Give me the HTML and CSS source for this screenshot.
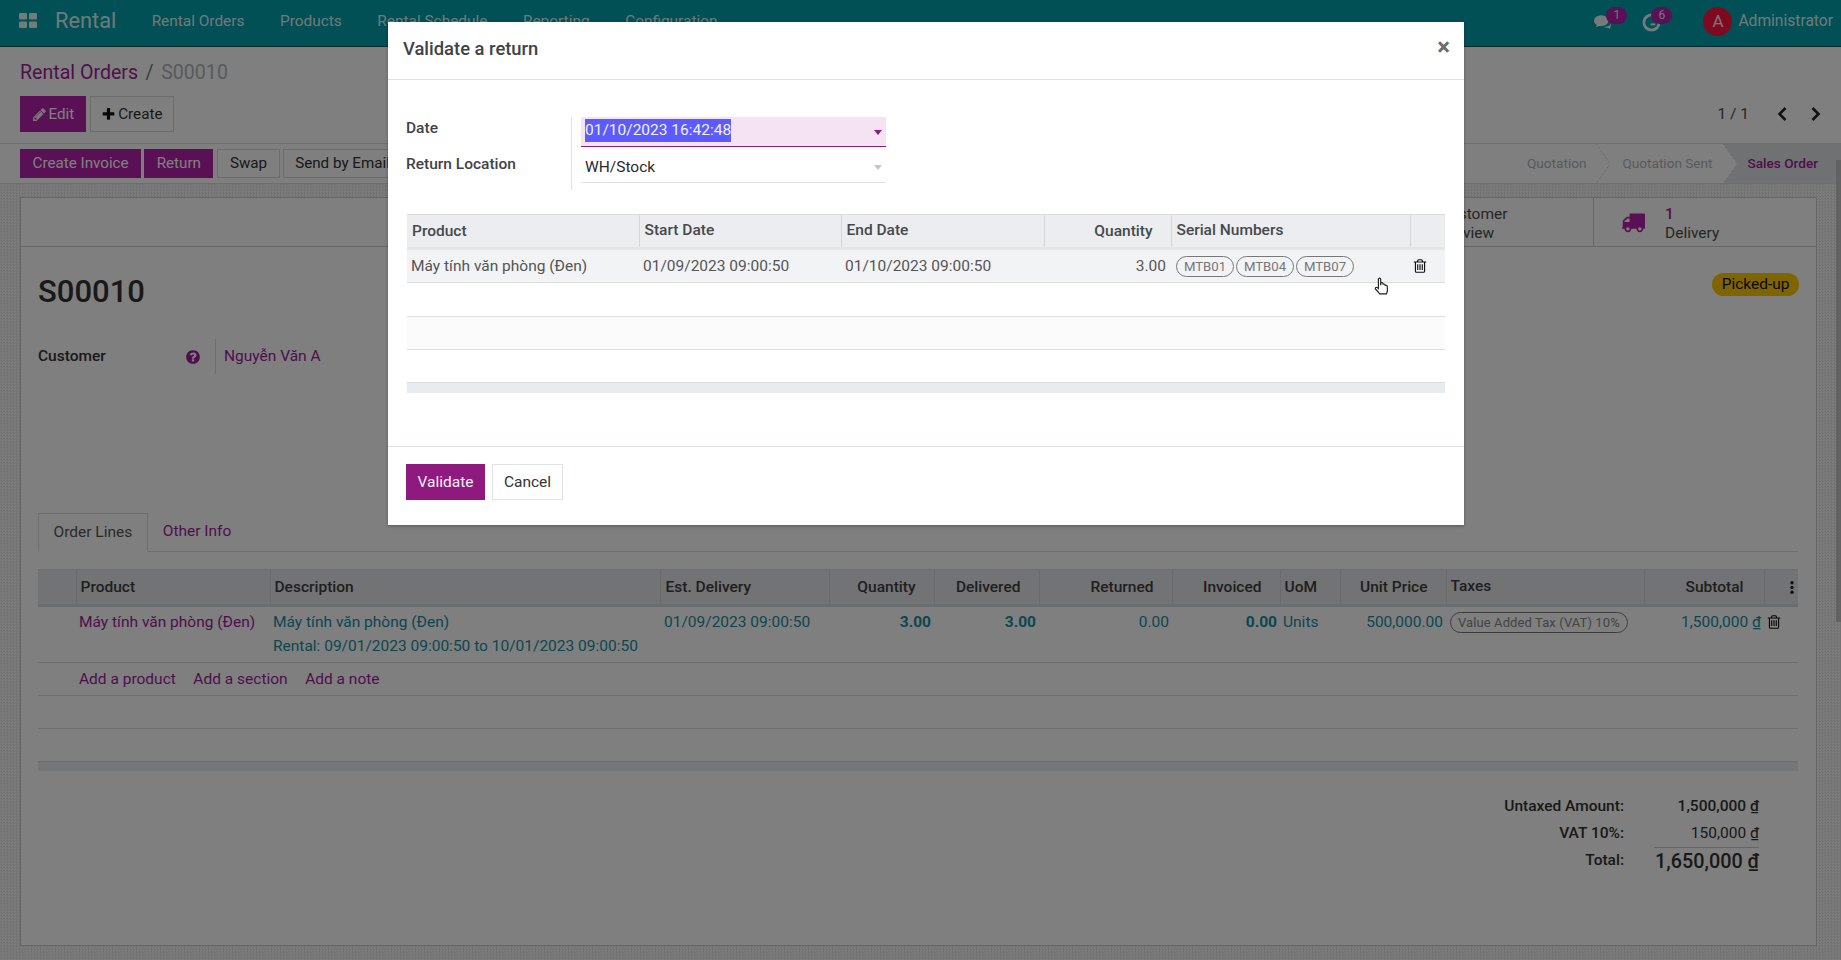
FILE: index.html
```html
<!DOCTYPE html>
<html lang="vi">
<head>
<meta charset="utf-8">
<title>Validate a return</title>
<link rel="stylesheet" href="styles.css">
</head>
<body>
<header class="navbar">
  <svg class="apps" viewBox="0 0 18 15"><rect width="8" height="6.5" rx="1.2"/><rect x="10" width="8" height="6.5" rx="1.2"/><rect y="8.5" width="8" height="6.5" rx="1.2"/><rect x="10" y="8.5" width="8" height="6.5" rx="1.2"/></svg>
  <span class="brand">Rental</span>
  <nav class="menu"><a>Rental Orders</a><a>Products</a><a>Rental Schedule</a><a>Reporting</a><a>Configuration</a></nav>
  <div class="systray">
    <span class="tray tray-chat">
      <svg class="tray-icon" viewBox="0 0 20 16"><ellipse cx="8" cy="6.5" rx="8" ry="6"/><path d="M4 10 2 14l6-3z"/><path d="M11 13.500c4 0 7-1.500 8-4l-1 6-5-1.500z"/></svg>
      <b class="count">1</b>
    </span>
    <span class="tray tray-clock">
      <svg class="tray-icon" viewBox="0 0 20 20"><circle cx="10" cy="10" r="8" fill="none" stroke="currentColor" stroke-width="3"/><path d="M9 11h5v2H9z"/></svg>
      <b class="count">6</b>
    </span>
    <span class="avatar">A</span>
    <span class="user">Administrator</span>
  </div>
</header>

<section class="control">
  <div class="crumbs"><a>Rental Orders</a><i>/</i><span>S00010</span></div>
  <div class="control-row">
    <button class="btn primary"><svg class="ico" viewBox="0 0 1792 1792"><path d="M491 1536l91-91-235-235-91 91v107h128v128h107zm523-928q0-22-22-22-10 0-17 7l-542 542q-7 7-7 17 0 22 22 22 10 0 17-7l542-542q7-7 7-17zm-54-192l416 416-832 832h-416v-416zm683 96q0 53-37 90l-166 166-416-416 166-165q36-38 90-38 53 0 91 38l235 234q37 39 37 91z"/></svg>Edit</button>
    <button class="btn plain"><svg class="ico dark" viewBox="0 0 1792 1792"><path d="M1600 736v192q0 40-28 68t-68 28h-416v416q0 40-28 68t-68 28h-192q-40 0-68-28t-28-68v-416h-416q-40 0-68-28t-28-68v-192q0-40 28-68t68-28h416v-416q0-40 28-68t68-28h192q40 0 68 28t28 68v416h416q40 0 68 28t28 68z"/></svg>Create</button>
    <div class="pager"><span>1 / 1</span>
      <svg class="chev" viewBox="0 0 12 16"><path d="M9 2 3 8l6 6"/></svg>
      <svg class="chev" viewBox="0 0 12 16"><path d="M3 2l6 6-6 6"/></svg>
    </div>
  </div>
</section>

<section class="statusbar">
  <button class="btn primary small">Create Invoice</button>
  <button class="btn primary small">Return</button>
  <button class="btn plain small swap">Swap</button>
  <button class="btn plain small">Send by Email</button>
  <div class="steps">
    <span class="step">Quotation</span>
    <span class="step">Quotation Sent</span>
    <span class="step current">Sales Order</span>
  </div>
</section>

<main class="content">
  <article class="sheet">
    <div class="stats">
      <div class="stat preview"><span>Customer<br>Preview</span></div>
      <div class="stat delivery">
        <svg class="truck" viewBox="0 0 1792 1792"><path d="M640 1408q0-52-38-90t-90-38-90 38-38 90 38 90 90 38 90-38 38-90zm-384-512h384v-256h-158q-13 0-22 9l-195 195q-9 9-9 22v30zm1280 512q0-52-38-90t-90-38-90 38-38 90 38 90 90 38 90-38 38-90zm256-1088v1024q0 15-4 26.500t-13.500 18.500-16.500 11.500-23.500 6-22.500 2-25.500 0-22.500-.5q0 106-75 181t-181 75-181-75-75-181h-384q0 106-75 181t-181 75-181-75-75-181h-64q-3 0-22.500.5t-25.500 0-22.500-2-23.500-6-16.500-11.500-13.500-18.500-4-26.500q0-26 19-45t45-19v-320q0-8-.5-35t0-38 2.500-34.500 6.500-37 14-30.500 22.500-30l198-198q19-19 50.500-32t58.500-13h160v-192q0-26 19-45t45-19h1024q26 0 45 19t19 45z"/></svg>
        <span class="stat-text"><b>1</b><span>Delivery</span></span>
      </div>
    </div>
    <div class="sheet-body">
      <div class="title-row">
        <h1>S00010</h1>
        <span class="ribbon">Picked-up</span>
      </div>
      <div class="customer">
        <label>Customer</label>
        <svg class="help" viewBox="0 0 1792 1792"><path d="M1024 1376v-192q0-14-9-23t-23-9h-192q-14 0-23 9t-9 23v192q0 14 9 23t23 9h192q14 0 23-9t9-23zm256-672q0-88-55.500-163t-138.500-116-170-41q-243 0-371 213-15 24 8 42l132 100q7 6 19 6 16 0 25-12 53-68 86-92 34-24 86-24 48 0 85.500 26t37.500 59q0 38-20 61t-68 45q-63 28-115.500 86.500t-52.500 125.500v36q0 14 9 23t23 9h192q14 0 23-9t9-23q0-19 21.500-49.500t54.500-49.500q32-18 49-28.500t46-35 44.500-48 28-60.500 12.500-81zm384 192q0 209-103 385.500t-279.500 279.500-385.500 103-385.500-103-279.500-279.500-103-385.500 103-385.500 279.500-279.500 385.500-103 385.500 103 279.500 279.500 103 385.500z"/></svg>
        <a>Nguyễn Văn A</a>
      </div>
      <div class="tabs"><span class="tab active">Order Lines</span><span class="tab">Other Info</span></div>

      <table class="grid lines">
        <colgroup><col class="l1"><col class="l2"><col class="l3"><col class="l4"><col class="l5"><col class="l6"><col class="l7"><col class="l8"><col class="l9"><col class="l10"><col class="l11"><col class="l12"><col class="l13"></colgroup>
        <thead><tr><th></th><th>Product</th><th>Description</th><th class="est">Est. Delivery</th><th class="num">Quantity</th><th class="num">Delivered</th><th class="num">Returned</th><th class="num">Invoiced</th><th>UoM</th><th class="num">Unit Price</th><th class="up">Taxes</th><th class="num sub">Subtotal</th><th class="kebab"><svg class="dots" viewBox="0 0 4 13"><circle cx="2" cy="1.700" r="1.700"/><circle cx="2" cy="6.500" r="1.700"/><circle cx="2" cy="11.300" r="1.700"/></svg></th></tr></thead>
        <tbody>
          <tr class="tall info"><td></td><td class="link">Máy tính văn phòng (Đen)</td><td class="wide">Máy tính văn phòng (Đen)<br>Rental: 09/01/2023 09:00:50 to 10/01/2023 09:00:50</td><td class="est">01/09/2023 09:00:50</td><td class="val strong">3.00</td><td class="val strong">3.00</td><td class="val">0.00</td><td class="val strong">0.00</td><td>Units</td><td class="val">500,000.00</td><td><span class="pill tax">Value Added Tax (VAT) 10%</span></td><td class="val">1,500,000 ₫</td><td class="act"><svg class="trash" viewBox="0 0 1792 1792"><use href="#trash"/></svg></td></tr>
          <tr><td></td><td colspan="12" class="adders"><a>Add a product</a><a>Add a section</a><a>Add a note</a></td></tr>
          <tr><td colspan="13"></td></tr>
          <tr><td colspan="13"></td></tr>
        </tbody>
        <tfoot><tr><td colspan="13"></td></tr></tfoot>
      </table>

      <div class="totals">
        <b>Untaxed Amount:</b><b class="amount">1,500,000 ₫</b>
        <b>VAT 10%:</b><span class="amount">150,000 ₫</span>
        <b class="total-label">Total:</b><span class="amount total">1,650,000 ₫</span>
      </div>
    </div>
  </article>
</main>

<div class="scrollbar"></div>
<div class="backdrop"></div>

<section class="modal">
  <header class="modal-head"><h4>Validate a return</h4><span class="close">×</span></header>
  <div class="modal-body">
    <div class="form">
      <div class="labels"><label>Date</label><label>Return Location</label></div>
      <div class="fields">
        <div class="field focus"><span class="selected">01/10/2023 16:42:48</span><i class="caret"></i></div>
        <div class="field"><span>WH/Stock</span><i class="caret"></i></div>
      </div>
    </div>
    <table class="grid dlg">
      <colgroup><col class="d1"><col class="d2"><col class="d3"><col class="d4"><col class="d5"><col class="d6"></colgroup>
      <thead><tr><th>Product</th><th class="up">Start Date</th><th class="up">End Date</th><th class="num">Quantity</th><th class="up">Serial Numbers</th><th></th></tr></thead>
      <tbody>
        <tr class="picked"><td>Máy tính văn phòng (Đen)</td><td>01/09/2023 09:00:50</td><td>01/10/2023 09:00:50</td><td class="val">3.00</td><td class="pills"><span class="pill">MTB01</span><span class="pill">MTB04</span><span class="pill">MTB07</span></td><td class="act"><svg class="trash" viewBox="0 0 1792 1792"><path id="trash" d="M704 736v576q0 14-9 23t-23 9h-64q-14 0-23-9t-9-23v-576q0-14 9-23t23-9h64q14 0 23 9t9 23zm256 0v576q0 14-9 23t-23 9h-64q-14 0-23-9t-9-23v-576q0-14 9-23t23-9h64q14 0 23 9t9 23zm256 0v576q0 14-9 23t-23 9h-64q-14 0-23-9t-9-23v-576q0-14 9-23t23-9h64q14 0 23 9t9 23zm128 724v-948h-896v948q0 22 7 40.500t14.500 27 10.500 8.500h832q3 0 10.500-8.500t14.500-27 7-40.500zm-672-1076h448l-48-117q-7-9-17-11h-317q-10 2-17 11zm928 32v64q0 14-9 23t-23 9h-96v948q0 83-47 143.500t-113 60.500h-832q-66 0-113-58.500t-47-141.500v-952h-96q-14 0-23-9t-9-23v-64q0-14 9-23t23-9h309l70-167q15-37 54-63t79-26h320q40 0 79 26t54 63l70 167h309q14 0 23 9t9 23z"/></svg></td></tr>
        <tr class="second"><td colspan="6"></td></tr>
        <tr class="stripe"><td colspan="6"></td></tr>
        <tr><td colspan="6"></td></tr>
      </tbody>
      <tfoot><tr><td colspan="6"></td></tr></tfoot>
    </table>
  </div>
  <footer class="modal-foot"><button class="btn validate">Validate</button><button class="btn cancel">Cancel</button></footer>
</section>

<svg class="hand" viewBox="0 0 20 22"><path d="M5.500 2.500c0-1.600 2.500-1.600 2.500 0V9l.2-2c.3-1.300 2.200-1.200 2.300.2l.1 1.300c.3-1.200 2.200-1 2.300.3l.1.900c.4-1 2.100-.8 2.200.5l.2 3.500c.1 2-.4 3.200-1 4.800H6.800c-1-1.700-2.300-3-4.300-5-1.200-1.300.3-2.800 1.700-1.800l1.300 1z"/></svg>
</body>
</html>
```

FILE: styles.css
```css
* { box-sizing: border-box; }
html, body { margin: 0; height: 100%; }
body {
  width: 1841px;
  height: 960px;
  overflow: hidden;
  position: relative;
  background: #fff;
  font: 400 15.5px/24px Roboto, "Noto Sans", sans-serif;
  color: #4c4c4c;
}
a { color: #a01c98; }
button { font: inherit; }
h1, h4 { margin: 0; }

/* top bar */
.navbar {
  height: 47px;
  display: flex;
  align-items: center;
  padding: 0 0 4px 19px;
  background: #00a0ac;
  border-bottom: 1px solid #00525a;
  color: rgba(255, 255, 255, .9);
}
.apps { width: 18px; height: 15px; fill: currentColor; margin-top: -1px; }
.brand { font-size: 21.800px; margin-left: 18px; }
.menu { display: flex; margin-left: 17.500px; font-size: 15.400px; }
.menu a { color: inherit; padding: 0 17.800px; }
.systray { margin-left: auto; display: flex; align-items: center; padding-right: 8px; font-size: 15.600px; }
.tray { position: relative; display: block; }
.tray-chat { width: 18px; height: 16px; margin: 1px 30px 0 1px; }
.tray-clock { width: 19px; height: 19px; margin: 3px 42px 0 0; }
.tray-icon { display: block; width: 100%; height: 100%; fill: currentColor; }
.count {
  position: absolute;
  font-weight: 400;
  font-size: 12px;
  line-height: 17px;
  width: 21px;
  height: 17px;
  border-radius: 9px;
  text-align: center;
  background: #b420aa;
}
.tray-chat .count { left: 12px; top: -7px; }
.tray-clock .count { left: 9px; top: -6px; }
.avatar {
  width: 29px;
  height: 29px;
  border-radius: 50%;
  background: #ff1540;
  text-align: center;
  line-height: 29px;
  font-size: 17px;
  margin-right: 6px;
}

/* control panel */
.control { height: 97px; padding: 14px 19px 0 20px; border-bottom: 1px solid #ddd; }
.crumbs { font-size: 19.600px; line-height: 24px; display: flex; }
.crumbs i { font-style: normal; color: #777; margin: 0 7.500px; }
.crumbs span { color: #adb5bd; }
.control-row { display: flex; align-items: center; margin-top: 11px; gap: 4px; }
.btn {
  height: 36px;
  padding: 0 10.500px;
  border: 1px solid transparent;
  border-radius: 0;
  display: inline-flex;
  align-items: center;
  gap: 2px;
  color: #444;
  background: #fff;
  font-size: 15.200px;
}
.btn.primary { background: #b420aa; color: #fff; }
.btn.plain { border-color: #d8d8d8; color: #333; }
.btn.small { height: 29px; padding: 0 11.500px 1px; }
.ico { width: 15px; height: 15px; fill: #fff; opacity: .9; }
.ico.dark { fill: #111; opacity: 1; }
.pager { margin-left: auto; display: flex; align-items: center; }
.pager span { margin-right: 27px; }
.chev { width: 13px; height: 16px; fill: none; stroke: #222; stroke-width: 2.600; }
.chev + .chev { margin-left: 20px; }

/* status bar */
.statusbar {
  height: 40px;
  display: flex;
  align-items: center;
  padding-left: 20px;
  border-bottom: 1px solid #ddd;
  gap: 3px;
}
.statusbar .swap { margin-left: 1px; }
.steps { margin-left: auto; display: flex; align-self: stretch; }
.step { display: flex; align-items: center; color: #adb5bd; padding: 0 24px 1px 12px; position: relative; font-size: 13.600px; }
.step::after {
  content: "";
  position: absolute;
  right: 0;
  top: 0;
  width: 14px;
  height: 100%;
  background: linear-gradient(to top right, transparent 49%, #ccc 50%, transparent 52%) top/100% 50% no-repeat,
              linear-gradient(to bottom right, transparent 49%, #ccc 50%, transparent 52%) bottom/100% 50% no-repeat;
}
.step.current {
  color: #a01c98;
  font-weight: 500;
  background: #dee2e6;
  clip-path: polygon(0 0, 100% 0, 100% 100%, 0 100%, 14px 50%);
  padding: 0 23px 1px 24px;
  margin-left: -13px;
}
.step.current::after { display: none; }

/* sheet */
.content {
  height: 776px;
  padding: 13px 24px 0 20px;
  background: repeating-conic-gradient(#e6e6e6 0 25%, #fbfbfb 0 50%) 0 0 / 3px 3px;
}
.sheet { height: 749px; background: #fff; border: 1px solid #ccc; }
.stats { height: 49px; display: flex; justify-content: flex-end; border-bottom: 1px solid #ccc; }
.stat { display: flex; align-items: center; line-height: 19px; padding-top: 3px; }
.preview { width: 213px; padding-left: 60px; }
.delivery { width: 223px; padding-left: 27px; border-left: 1px solid #ccc; gap: 20px; }
.truck { width: 24px; height: 24px; fill: #b420aa; margin-top: -3px; }
.stat-text { display: flex; flex-direction: column; }
.stat-text b { color: #a01c98; font-weight: 500; }
.sheet-body { padding: 21px 18px 0 17px; }
.title-row { display: flex; justify-content: space-between; height: 48px; }
h1 { font-size: 31px; line-height: 48px; font-weight: 500; color: #333; }
.ribbon {
  height: 23px;
  margin: 5px -1px 0 0;
  padding: 0 9.500px;
  border-radius: 12px;
  background: #ffc800;
  color: #111;
  line-height: 23px;
  font-size: 15.500px;
}
.customer { display: flex; align-items: center; height: 35px; margin-top: 23px; }
.customer label { width: 147px; font-weight: 500; color: #333; margin-top: -2px; }
.help { width: 16px; height: 16px; fill: #a01c98; }
.customer a { border-left: 1px solid #ddd; margin-left: 14px; padding-left: 8px; height: 35px; line-height: 35px; }
.tabs { display: flex; margin-top: 139px; height: 39px; border-bottom: 1px solid #ddd; }
.tab { padding: 6px 15px; color: #a01c98; height: 39px; }
.tab.active { color: #555; border: 1px solid #ddd; border-bottom-color: #fff; height: 39px; padding-left: 14.500px; padding-right: 14.500px; }

/* tables */
.grid { table-layout: fixed; border-collapse: collapse; width: 100%; }
.grid th {
  height: 35px;
  padding: 0 4px 1px;
  background: #e4e6e9;
  border-left: 1px solid #d4d6da;
  border-top: 1px solid #dcdcdc;
  border-bottom: 3px solid #d4dbe0;
  text-align: left;
  font-weight: 500;
  color: #3f3f3f;
  overflow: hidden;
  white-space: nowrap;
}
.grid th:first-child { border-left: 0; }
.grid th.num { text-align: right; padding-right: 18px; }
.grid th.up { padding-top: 0; padding-bottom: 3px; }
.grid th.est { padding-left: 5px; }
.grid th.sub { padding-right: 20px; }
.grid td {
  height: 33px;
  padding: 0 4px 0 3px;
  border-bottom: 1px solid #ddd;
  white-space: nowrap;
  overflow: hidden;
}
.grid td.est { padding-left: 4px; }
.grid tfoot td { height: 10px; background: #e9ecef; border: 0; padding: 0; }
.grid .val { text-align: right; padding-right: 3px; }
.lines { margin-top: 17px; }
.lines th { height: 36px; }
.lines th.kebab { padding: 0 0 0 25px; }
.lines tfoot td { height: 9px; }
.dots { display: block; width: 4px; height: 13px; fill: #222; }
.info td { color: #168ea0; vertical-align: top; padding-top: 3px; height: 57px; }
.info td.link { color: #a01c98; }
.strong { font-weight: 700; }
.adders a { margin-right: 17.500px; }
.pill {
  display: inline-block;
  height: 21px;
  line-height: 19px;
  border: 1px solid #777;
  border-radius: 11px;
  color: #777;
  padding: 0 7px;
  font-size: 13.200px;
  margin-right: 2px;
}
.pill.tax { padding: 0 7px; margin: 2px 0 0 1px; color: #888; font-size: 13px; letter-spacing: .1px; }
.trash { width: 16px; height: 16px; fill: #111; display: block; }
.l1 { width: 38px; } .l2 { width: 194px; } .l3 { width: 390px; } .l4 { width: 169px; }
.l5, .l6 { width: 105px; } .l7 { width: 133px; } .l8 { width: 108px; } .l9 { width: 60px; }
.l10 { width: 106px; } .l11 { width: 198px; } .l12 { width: 120px; } .l13 { width: 34px; }
.info td.act { padding: 7px 0 0 2px; }

/* totals */
.totals {
  display: grid;
  grid-template-columns: auto 135px;
  width: max-content;
  margin: 22px 39px 0 auto;
  justify-items: end;
  align-items: center;
  grid-auto-rows: 27px;
  color: #333;
}
.totals b { font-weight: 500; }
.totals .amount { width: 105px; text-align: right; white-space: nowrap; }
b.amount { font-weight: 500; }
.amount.total {
  font-size: 19.800px;
  font-weight: 500;
  border-top: 1px solid #ccc;
  line-height: 28px;
  height: 30px;
  margin-top: 3px;
}

/* overlay */
.scrollbar { position: absolute; right: 0; top: 160px; width: 5px; height: 462px; background: #c4c4c4; }
.backdrop { position: absolute; inset: 0; background: rgba(0, 0, 0, .5); }
.modal {
  position: absolute;
  left: 388px;
  top: 22px;
  width: 1076px;
  height: 503px;
  background: #fff;
  display: flex;
  flex-direction: column;
  box-shadow: 0 1px 3px rgba(0, 0, 0, .3);
}
.modal-head {
  height: 58px;
  flex: none;
  display: flex;
  align-items: center;
  justify-content: space-between;
  padding: 0 14px 3px 15px;
  border-bottom: 1px solid #dee2e6;
}
.modal-head h4 { font-size: 18.400px; font-weight: 500; color: #3f4347; }
.close { font-size: 24px; font-weight: 700; color: #6c6c6c; margin-top: -4px; }
.modal-body { flex: 1; padding: 37px 20px 0 19px; border-bottom: 1px solid #dee2e6; }
.form { display: flex; height: 73px; }
.labels { width: 164px; display: flex; flex-direction: column; gap: 12px; margin: -1px 1px 0 -1px; }
.labels label { font-weight: 500; color: #3f4347; line-height: 24px; }
.fields { border-left: 1px solid #dee2e6; padding-left: 9px; width: 315px; display: flex; flex-direction: column; gap: 6px; }
.field {
  height: 30px;
  padding: 1px 4px 0;
  border-bottom: 1px solid #dee2e6;
  color: #2a2a2a;
  display: flex;
  align-items: flex-start;
  justify-content: space-between;
  line-height: 27px;
}
.field.focus { background: #f5e3f3; border-bottom-color: #8e1a80; line-height: 23px; padding-top: 2px; }
.selected { background: #5b5bff; color: #f5f0ff; }
.caret {
  width: 0;
  height: 0;
  margin: 11px 0 0;
  border: 4.500px solid transparent;
  border-top: 5px solid #c6c6c6;
  border-bottom: 0;
}
.focus .caret { border-top-color: #8e1a80; }
.dlg { margin-top: 24px; color: #555; }
.dlg th { height: 34px; padding: 0 5px 1px; background: #ecedef; border-bottom-color: #e1e6ea; color: #45494d; }
.dlg td { padding: 0 4px; }
.picked td, .second td { height: 34px; }
.picked td { background: #f2f3f5; }
.stripe td { background: #fbfbfb; }
.dlg .val { padding-right: 5px; }
.dlg .pills { padding-left: 5px; }
.dlg .act { padding: 0 0 0 2px; }
.pills .pill { width: 58px; padding: 0; text-align: center; margin-top: 2px; }
.d1 { width: 232px; } .d2 { width: 202px; } .d3 { width: 203px; } .d4 { width: 127px; } .d5 { width: 239px; } .d6 { width: 35px; }
.modal-foot { padding: 17px 18px; display: flex; gap: 7px; flex: none; height: 78px; }
.btn.validate { background: #8e1a80; color: #f8eef7; width: 79px; justify-content: center; font-size: 15.500px; }
.btn.cancel { border-color: #dee2e6; color: #333; width: 71px; justify-content: center; font-size: 15.500px; }
.hand {
  position: absolute;
  left: 1373px;
  top: 277px;
  width: 19px;
  height: 20px;
  fill: #fff;
  stroke: #222;
  stroke-width: 1.300;
}
```
